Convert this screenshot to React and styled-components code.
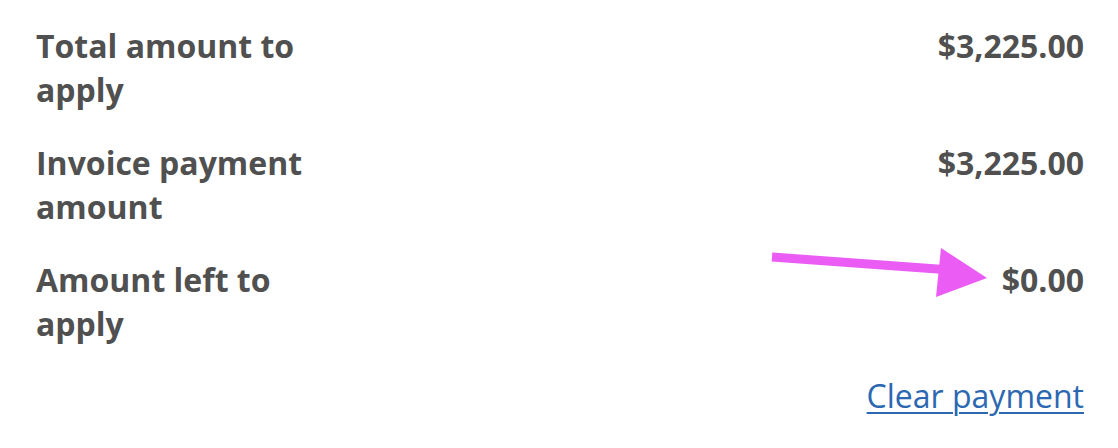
import React from 'react';
import styled, { createGlobalStyle } from "styled-components";

const GlobalStyle = createGlobalStyle`
  body {
    margin: 0;
    background: #ffffff;
    font-family: "Open Sans", "Liberation Sans", sans-serif;
  }
`;

const Container = styled.div`
  width: 1118px;
  height: 448px;
  box-sizing: border-box;
  padding: 24px 34px 0 36px;
  color: #505050;
`;

const List = styled.div`
  display: flex;
  flex-direction: column;
  gap: 29px;
`;

const Row = styled.div`
  display: flex;
  justify-content: space-between;
  align-items: flex-start;
`;

const Label = styled.div`
  width: 300px;
  font-size: 32px;
  font-weight: 700;
  line-height: 44px;
`;

const Value = styled.div`
  position: relative;
  font-size: 32px;
  font-weight: 700;
  line-height: 44px;
`;

const Arrow = styled.svg`
  position: absolute;
  right: calc(100% + 15px);
  top: -10px;
  overflow: visible;
`;

const Footer = styled.div`
  display: flex;
  justify-content: flex-end;
  margin-top: 28px;
`;

const Link = styled.a`
  font-size: 32px;
  line-height: 44px;
  color: #2b68b1;
  text-decoration: underline;
  text-underline-offset: 4px;
  text-decoration-thickness: 2px;
  cursor: pointer;
`;

const rows = [
  {label: "Total amount to apply", value: "$3,225.00"},
  {label: "Invoice payment amount", value: "$3,225.00"},
  {label: "Amount left to apply", value: "$0.00", pointer: true},
];

const App = () => {
    return (
        <Container>
            <GlobalStyle/>
            <List>
                {rows.map((r) => (
                    <Row key={r.label}>
                        <Label>{r.label}</Label>
                        <Value>
                            {r.pointer && (
                                <Arrow width="215" height="49" viewBox="0 0 215 49">
                                    <line x1="0" y1="9" x2="172" y2="21.5" stroke="#eb5cf5" strokeWidth="9"/>
                                    <polygon points="169,0 215,30 164,49" fill="#eb5cf5"/>
                                </Arrow>
                            )}
                            {r.value}
                        </Value>
                    </Row>
                ))}
            </List>
            <Footer>
                <Link>Clear payment</Link>
            </Footer>
        </Container>
    );
};

export default App;
